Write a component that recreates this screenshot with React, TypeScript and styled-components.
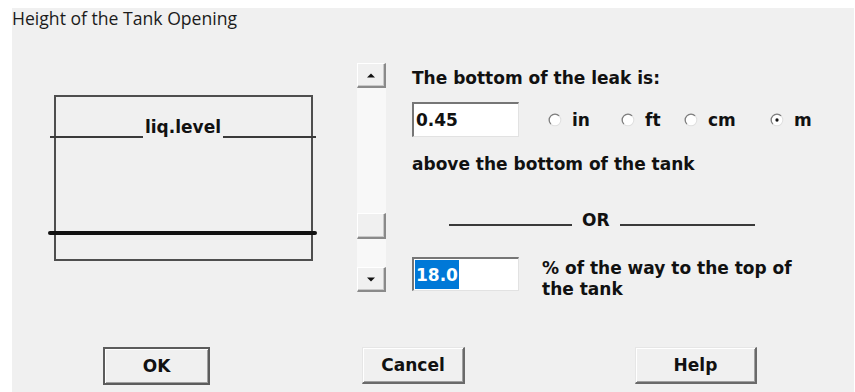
import React from 'react';
import styled, { createGlobalStyle } from 'styled-components';

const GlobalStyle = createGlobalStyle`
  html, body { margin: 0; padding: 0; background: #ffffff; }
  body { width: 855px; height: 392px; overflow: hidden; }
  * { box-sizing: border-box; }
`;

const DIALOG_FONT = `"DejaVu Sans", "Liberation Sans", sans-serif`;

const LIQUID_PCT = 75;
const LEAK_PCT = 18.0;
const TANK_H = 166;
const TRACK_H = 179;
const THUMB_H = 26;

const Window = styled.div`
  margin: 8px 1px 0 12px;
  height: 384px;
  background: #f0f0f0;
  display: flex;
  flex-direction: column;
  color: #111;
  font-family: ${DIALOG_FONT};
  font-weight: bold;
  font-size: 17px;
`;

const Title = styled.div`
  font-family: "Open Sans", "Noto Sans", sans-serif;
  font-weight: normal;
  font-size: 17.6px;
  line-height: 22px;
  height: 22px;
  margin-top: -1px;
  color: #1b1b1b;
`;

const Body = styled.div`
  display: flex;
  align-items: flex-start;
  height: 229px;
  margin-top: 34px;
  padding-left: 36px;
`;

/* tank drawing */
const Diagram = styled.div`
  position: relative;
  width: 269px;
  margin-top: 32px;
  padding: 0 4px 0 6px;
`;

const Tank = styled.div`
  height: ${TANK_H}px;
  border: 2px solid #4e4e4e;
`;

const LevelRow = styled.div`
  position: absolute;
  left: 2px;
  right: 1px;
  display: flex;
  align-items: flex-end;
  height: 20px;
`;

const LevelRule = styled.div`
  flex: 1;
  border-bottom: 2px solid #3a3a3a;
`;

const LevelLabel = styled.span`
  line-height: 20px;
  padding: 0 2px;
  background: #f0f0f0;
  position: relative;
  top: -1px;
`;

const LeakLine = styled.div`
  position: absolute;
  left: 0;
  right: 0;
  height: 4px;
  border-radius: 2px;
  background: #111;
`;

/* scrollbar */
const ScrollBar = styled.div`
  width: 29px;
  height: 229px;
  margin-left: 40px;
  display: flex;
  flex-direction: column;
  background: #f8f8f8;
`;

const Raised = styled.div`
  background: #f0f0f0;
  border-style: solid;
  border-width: 1px 2px 2px 1px;
  border-color: #ffffff #8a8a8a #8a8a8a #ffffff;
  box-shadow: inset -1px -1px #c8c8c8;
`;

const ArrowButton = styled(Raised)`
  height: 25px;
  display: flex;
  align-items: center;
  justify-content: center;
`;

const Track = styled.div`
  position: relative;
  flex: 1;
`;

const Thumb = styled(Raised)`
  position: absolute;
  left: 0;
  right: 0;
  height: ${THUMB_H}px;
`;

/* right column */
const Column = styled.div`
  display: flex;
  flex-direction: column;
  margin-left: 26px;
  margin-top: 5px;
  line-height: 20px;
`;

const Line = styled.div<{ $gap: number }>`
  margin-top: ${p => p.$gap}px;
`;

const Row = styled.div<{ $gap: number; $align?: string }>`
  display: flex;
  align-items: ${p => p.$align || 'center'};
  margin-top: ${p => p.$gap}px;
`;

const Field = styled.div<{ $h: number }>`
  width: 107px;
  height: ${p => p.$h}px;
  background: #fff;
  border-style: solid;
  border-width: 2px 1px 1px 2px;
  border-color: #767676 #e2e2e2 #e2e2e2 #767676;
  padding: 1px 0 1px 1px;
  display: flex;
  align-items: stretch;
`;

const FieldText = styled.span<{ $selected?: boolean }>`
  display: flex;
  align-items: center;
  padding: 0 1px;
  background: ${p => (p.$selected ? '#0078d7' : 'transparent')};
  color: ${p => (p.$selected ? '#fff' : '#111')};
`;

const Units = styled.div`
  display: flex;
  align-items: center;
  margin-left: 29px;
`;

const Choice = styled.div<{ $w?: number }>`
  display: flex;
  align-items: center;
  gap: 10px;
  width: ${p => (p.$w ? `${p.$w}px` : 'auto')};
`;

const OrRow = styled.div`
  display: flex;
  align-items: flex-end;
  margin-top: 36px;
  padding-left: 37px;
`;

const OrRule = styled.div<{ $w: number }>`
  width: ${p => p.$w}px;
  border-bottom: 2px solid #3a3a3a;
  margin-bottom: 4px;
`;

const OrText = styled.span`
  margin: 0 10px;
`;

const Note = styled.div`
  margin-left: 23px;
  margin-top: 1px;
  line-height: 21px;
`;

/* buttons */
const Buttons = styled.div`
  display: flex;
  align-items: flex-start;
  margin-top: 55px;
  padding-left: 91px;
`;

const Button = styled.button<{ $w: number; $left: number; $default?: boolean }>`
  width: ${p => p.$w}px;
  height: ${p => (p.$default ? 38 : 37)}px;
  margin-left: ${p => p.$left}px;
  font: inherit;
  color: #111;
  background: #f0f0f0;
  padding: 0;
  border-style: solid;
  border-width: ${p => (p.$default ? '2px' : '1px 2px 2px 1px')};
  border-color: ${p => (p.$default ? '#5c5c5c' : '#e6e6e6 #6a6a6a #6a6a6a #e6e6e6')};
  box-shadow: inset 1px 1px #fff, inset -1px -1px #a0a0a0;
`;

function Radio({ checked }: { checked?: boolean }) {
  return (
    <svg width="14" height="14" viewBox="0 0 12 12">
      <circle cx="6" cy="6" r="5" fill="#fff" stroke="#e0e0e0" strokeWidth="0.9" />
      <path d="M9.54 2.46 A5 5 0 0 0 2.46 9.54" fill="none" stroke="#7e7e7e" strokeWidth="1.1" />
      {checked && <circle cx="6" cy="6" r="1.4" fill="#111" />}
    </svg>
  );
}

function Arrow({ up }: { up?: boolean }) {
  return (
    <svg width="8" height="5" viewBox="0 0 8 5">
      <polygon points={up ? '0,4.5 4,0.5 8,4.5' : '0,0.5 4,4.5 8,0.5'} fill="#111" />
    </svg>
  );
}

const UNITS = [
  { label: 'in', w: 73 },
  { label: 'ft', w: 63 },
  { label: 'cm', w: 86 },
  { label: 'm', w: 0, checked: true },
];

export default function App() {
  const levelTop = TANK_H * (1 - LIQUID_PCT / 100) - 19;
  const leakTop = TANK_H * (1 - LEAK_PCT / 100);
  const thumbTop = (TRACK_H - THUMB_H) * (1 - LEAK_PCT / 100);

  return (
    <>
      <GlobalStyle />
      <Window>
        <Title>Height of the Tank Opening</Title>
        <Body>
          <Diagram>
            <Tank />
            <LevelRow style={{ top: levelTop }}>
              <LevelRule />
              <LevelLabel>liq.level</LevelLabel>
              <LevelRule />
            </LevelRow>
            <LeakLine style={{ top: leakTop }} />
          </Diagram>

          <ScrollBar>
            <ArrowButton><Arrow up /></ArrowButton>
            <Track>
              <Thumb style={{ top: thumbTop }} />
            </Track>
            <ArrowButton><Arrow /></ArrowButton>
          </ScrollBar>

          <Column>
            <div>The bottom of the leak is:</div>
            <Row $gap={14}>
              <Field $h={35}>
                <FieldText>0.45</FieldText>
              </Field>
              <Units>
                {UNITS.map(u => (
                  <Choice key={u.label} $w={u.w || undefined}>
                    <Radio checked={u.checked} />
                    <span>{u.label}</span>
                  </Choice>
                ))}
              </Units>
            </Row>
            <Line $gap={17}>above the bottom of the tank</Line>
            <OrRow>
              <OrRule $w={123} />
              <OrText>OR</OrText>
              <OrRule $w={135} />
            </OrRow>
            <Row $gap={27} $align="flex-start">
              <Field $h={34}>
                <FieldText $selected>18.0</FieldText>
              </Field>
              <Note>
                % of the way to the top of
                <br />
                the tank
              </Note>
            </Row>
          </Column>
        </Body>

        <Buttons>
          <Button $w={107} $left={0} $default>OK</Button>
          <Button $w={103} $left={152}>Cancel</Button>
          <Button $w={122} $left={170}>Help</Button>
        </Buttons>
      </Window>
    </>
  );
}
